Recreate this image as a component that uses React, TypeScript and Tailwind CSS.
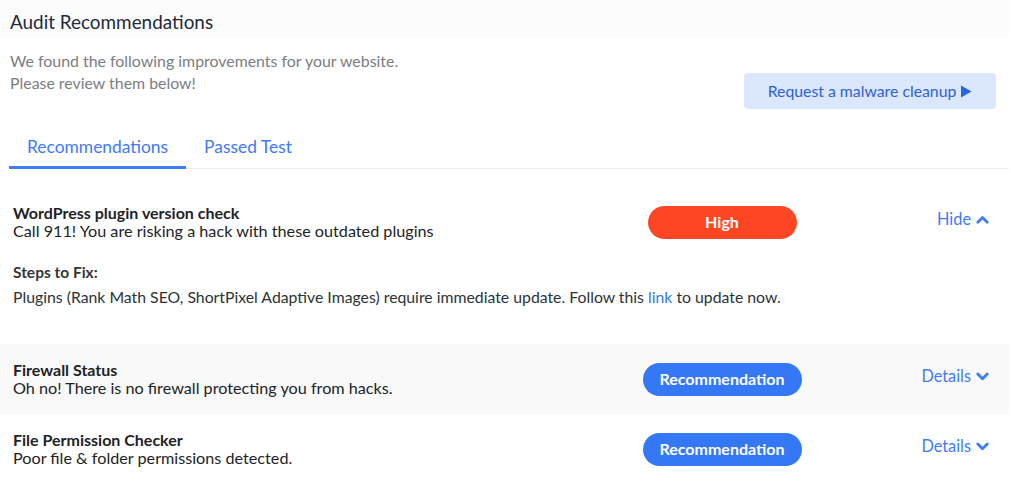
import React from "react";

const Chevron = ({ up }: { up?: boolean }) => (
  <svg width="13" height="9" viewBox="0 0 13 9" className="ml-[5px]" aria-hidden>
    <path
      d={up ? "M1.8 7.2 L6.5 2.5 L11.2 7.2" : "M1.8 2 L6.5 6.7 L11.2 2"}
      fill="none"
      stroke="currentColor"
      strokeWidth="2.8"
      strokeLinecap="round"
      strokeLinejoin="round"
    />
  </svg>
);

type RowProps = {
  title: string;
  subtitle: string;
  pill: string;
  pillClass: string;
  toggle: string;
  up?: boolean;
  gray?: boolean;
  children?: React.ReactNode;
};

const Row = ({ title, subtitle, pill, pillClass, toggle, up, gray, children }: RowProps) => (
  <div className={gray ? "bg-[#f9f9f9]" : "bg-white"}>
    <div className="flex items-center pl-[13px] pr-[20px] py-[17px]">
      <div className="flex-1 min-w-0">
        <div className="text-[16px] leading-[18px] font-bold text-[#1d2327]">{title}</div>
        <div className="text-[16.2px] leading-[18px] text-[#1d2327]">{subtitle}</div>
      </div>
      <div className="w-[200px] flex justify-center">
        <div
          className={`h-[33px] rounded-full flex items-center justify-center text-white font-bold text-[16px] ${pillClass}`}
        >
          {pill}
        </div>
      </div>
      <div className="w-[167px] mb-[5px] flex justify-end items-center text-[#3d7cf6] text-[16.3px]">
        <span>{toggle}</span>
        <Chevron up={up} />
      </div>
    </div>
    {children}
  </div>
);

export default function App() {
  return (
    <div
      className="w-[1009px] bg-white text-[#1d2327] min-h-[483px]"
      style={{ fontFamily: "Lato, 'Open Sans', sans-serif" }}
    >
      <div className="h-[38px] bg-[#fcfcfc] pl-[10px] pt-[10px]">
        <h1 className="text-[18.9px] leading-[24px] text-[#1e2a3a] font-normal">Audit Recommendations</h1>
      </div>
      <div className="flex items-start pl-[10px] pr-[13px] mt-[12px]">
        <p className="flex-1 text-[15.9px] leading-[22px] text-[#7a7d82]">
          We found the following improvements for your website.
          <br />
          Please review them below!
        </p>
        <button className="mt-[23px] h-[36px] w-[252px] rounded-[4px] bg-[#dbe7fc] text-[#2e5fd9] text-[15.8px] flex items-center justify-center">
          Request a malware cleanup
          <svg width="12" height="13" viewBox="0 0 12 13" className="ml-[4px]" aria-hidden>
            <path d="M1 0.5 L11.5 6.5 L1 12.5 Z" fill="#2a63e0" />
          </svg>
        </button>
      </div>
      <div className="mt-[21px] ml-[9px] flex border-b border-[#ececec]">
        <div className="px-[18px] pt-[6px] pb-[8px] -mb-px border-b-[3px] border-[#3b7ef6] text-[17.4px] leading-[22px] text-[#3e7bf7]">
          Recommendations
        </div>
        <div className="px-[18px] pt-[6px] pb-[8px] -mb-px border-b-[3px] border-transparent text-[17.4px] leading-[22px] text-[#3e7bf7]">
          Passed Test
        </div>
      </div>
      <div className="mt-[18px]">
        <Row
          title="WordPress plugin version check"
          subtitle="Call 911! You are risking a hack with these outdated plugins"
          pill="High"
          pillClass="w-[149px] bg-[#ff4624]"
          toggle="Hide"
          up
        >
          <div className="pl-[13px] pr-[20px] pt-[5px] pb-[37px]">
            <div className="text-[15.5px] leading-[20px] font-bold text-[#33363a]">Steps to Fix:</div>
            <div className="mt-[5px] text-[15.8px] leading-[20px] text-[#2c3338]">
              Plugins (Rank Math SEO, ShortPixel Adaptive Images) require immediate update. Follow this{" "}
              <span className="text-[#2f7ae5]">link</span> to update now.
            </div>
          </div>
        </Row>
        <Row
          title="Firewall Status"
          subtitle="Oh no! There is no firewall protecting you from hacks."
          pill="Recommendation"
          pillClass="w-[159px] bg-[#3478f6]"
          toggle="Details"
          gray
        />
        <Row
          title="File Permission Checker"
          subtitle="Poor file & folder permissions detected."
          pill="Recommendation"
          pillClass="w-[159px] bg-[#3478f6]"
          toggle="Details"
        />
      </div>
    </div>
  );
}
